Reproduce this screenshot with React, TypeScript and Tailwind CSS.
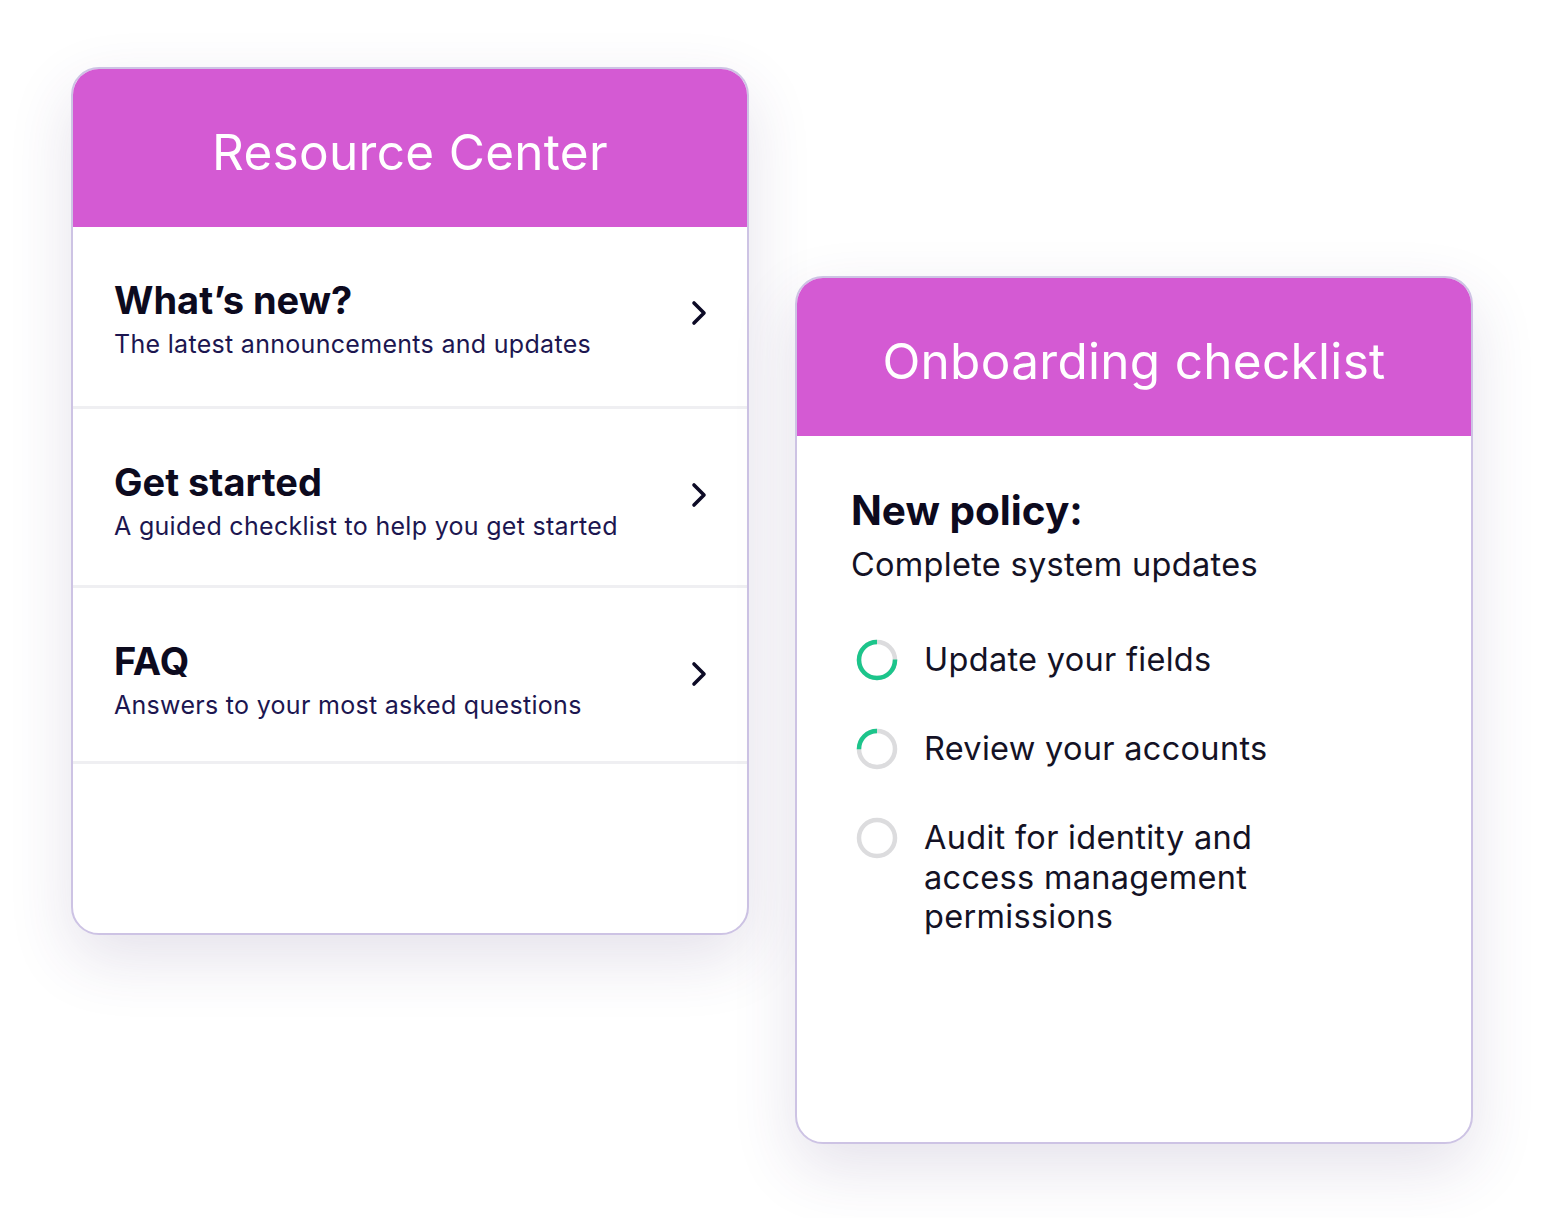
import React from 'react';

const resources = [
  { title: 'What’s new?', sub: 'The latest announcements and updates', h: 'h-[182px]' },
  { title: 'Get started', sub: 'A guided checklist to help you get started', h: 'h-[179px]' },
  { title: 'FAQ', sub: 'Answers to your most asked questions', h: 'h-[176px]' },
];

const tasks = [
  { label: 'Update your fields', progress: 0.75 },
  { label: 'Review your accounts', progress: 0.25 },
  { label: 'Audit for identity and access management permissions', progress: 0 },
];

function Chevron() {
  return (
    <svg width="20" height="28" viewBox="0 0 20 28" fill="none">
      <polyline
        points="5,4 15,14 5,24"
        stroke="#0d0b26"
        strokeWidth="3.6"
        strokeLinecap="round"
        strokeLinejoin="round"
      />
    </svg>
  );
}

function Progress({ value }: { value: number }) {
  const r = 18;
  const c = 2 * Math.PI * r;
  return (
    <svg width="42" height="42" viewBox="0 0 42 42" className="shrink-0">
      <circle cx="21" cy="21" r={r} fill="none" stroke="#dcdcde" strokeWidth="4.5" />
      {value > 0 && (
        <circle
          cx="21"
          cy="21"
          r={r}
          fill="none"
          stroke="#1cc58b"
          strokeWidth="4.5"
          strokeDasharray={`${c * value} ${c}`}
          transform="rotate(-90 21 21) scale(1 -1) translate(0 -42)"
        />
      )}
    </svg>
  );
}

function Card({ title, className, children }: { title: string; className?: string; children: React.ReactNode }) {
  return (
    <div
      className={`w-[678px] h-[868px] shrink-0 rounded-[28px] border-2 border-[#cdc3e4] bg-white overflow-hidden shadow-[0_24px_64px_rgba(70,50,110,0.14)] flex flex-col ${className ?? ''}`}
    >
      <div className="h-[158px] shrink-0 bg-[#d45ad3] flex items-center justify-center">
        <h1 className="text-white text-[49.5px] leading-none font-normal tracking-[0.3px] mt-[9px]">{title}</h1>
      </div>
      {children}
    </div>
  );
}

export default function App() {
  return (
    <div
      className="min-h-[1218px] w-[1542px] bg-white flex items-start gap-[46px] pl-[71px] pt-[67px]"
      style={{ fontFamily: 'Inter, "Noto Sans", sans-serif' }}
    >
      <Card title="Resource Center">
        <div className="flex flex-col">
          {resources.map((r) => (
            <div key={r.title} className={`${r.h} border-b-[3px] border-[#efeff2] flex items-start justify-between pl-[41px] pr-[38px]`}>
              <div className="pt-[51px]">
                <div className="text-[38px] leading-[44px] font-bold text-[#0c0a1e]">{r.title}</div>
                <div className="mt-[6px] text-[25px] leading-[32px] text-[#1c1650] tracking-[0.3px]">{r.sub}</div>
              </div>
              <div className="pt-[72px]">
                <Chevron />
              </div>
            </div>
          ))}
        </div>
      </Card>

      <Card title="Onboarding checklist" className="mt-[209px]">
        <div className="pl-[54px] pr-[40px] pt-[51px]">
          <div className="text-[40.5px] leading-[48px] font-bold text-[#0c0a1e]">New policy:</div>
          <div className="mt-[10px] text-[32.5px] leading-[40px] text-[#141225] tracking-[0.3px]">Complete system updates</div>
          <div className="mt-[55px] flex flex-col gap-[48px]">
            {tasks.map((t) => (
              <div key={t.label} className="flex items-start gap-[26px] ml-[5px]">
                <div className="-mt-[1px]">
                  <Progress value={t.progress} />
                </div>
                <div className="text-[32.5px] leading-[39.5px] text-[#141225] max-w-[360px] tracking-[0.3px]">{t.label}</div>
              </div>
            ))}
          </div>
        </div>
      </Card>
    </div>
  );
}
